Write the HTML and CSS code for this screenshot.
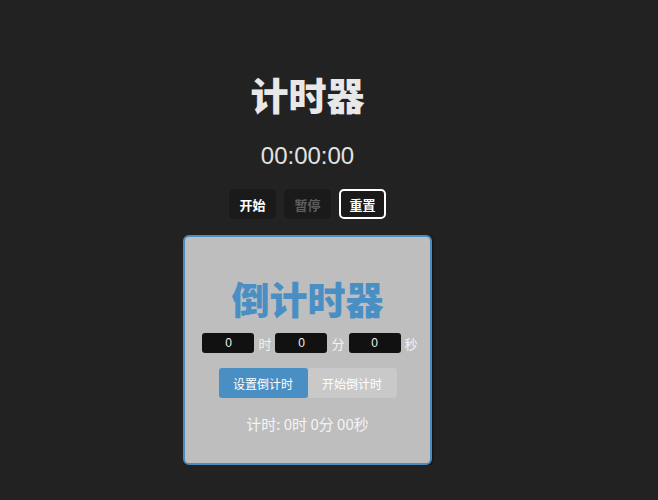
FILE: index.html
```html
<!DOCTYPE html>
<html lang="zh">
<head>
<meta charset="utf-8">
<title>计时器</title>
<link rel="stylesheet" href="styles.css">
</head>
<body>
<div class="page">
  <h1 class="title">计时器</h1>
  <div class="clock">00:00:00</div>
  <div class="controls">
    <button class="btn">开始</button>
    <button class="btn btn-disabled">暂停</button>
    <button class="btn btn-focus">重置</button>
  </div>
  <div class="card">
    <h2 class="card-title">倒计时器</h2>
    <div class="inputs">
      <input class="num" type="text" value="0"><span class="unit">时</span>
      <input class="num" type="text" value="0"><span class="unit">分</span>
      <input class="num" type="text" value="0"><span class="unit">秒</span>
    </div>
    <div class="actions">
      <button class="act act-primary">设置倒计时</button>
      <button class="act act-secondary">开始倒计时</button>
    </div>
    <div class="result">计时: 0时 0分 00秒</div>
  </div>
</div>
</body>
</html>
```
FILE: styles.css
```css
html, body {
  margin: 0;
  padding: 0;
  background: #222222;
  font-family: "Liberation Sans", "Noto Sans CJK SC", sans-serif;
}
.page {
  width: 615px;
  padding-top: 71px;
  display: flex;
  flex-direction: column;
  align-items: center;
}
.title {
  margin: 0;
  font-size: 38px;
  line-height: 46px;
  font-weight: 900;
  color: #e8e8e8;
  font-family: "Noto Sans CJK SC", sans-serif;
}
.clock {
  margin-top: 24px;
  font-size: 24px;
  line-height: 30px;
  color: #e2e2e2;
}
.controls {
  margin-top: 18px;
  display: flex;
  gap: 8px;
}
.btn {
  box-sizing: border-box;
  width: 47px;
  height: 30px;
  border: 2px solid transparent;
  border-radius: 5px;
  background: #1a1a1a;
  color: #ffffff;
  font-size: 13px;
  font-weight: 700;
  font-family: "Noto Sans CJK SC", sans-serif;
  padding: 0;
}
.btn-disabled {
  color: #5e5e5e;
}
.btn-focus {
  border-color: #ffffff;
}
.card {
  box-sizing: border-box;
  margin-top: 16px;
  width: 249px;
  height: 230px;
  background: #bebebe;
  border: 2px solid #4a8cc0;
  border-radius: 6px;
  box-shadow: 1px 1px 2px rgba(0,0,0,0.5);
  display: flex;
  flex-direction: column;
  align-items: center;
  padding-top: 38px;
}
.card-title {
  margin: 0;
  font-size: 38px;
  line-height: 46px;
  font-weight: 900;
  color: #4a8fc4;
  font-family: "Noto Sans CJK SC", sans-serif;
}
.inputs {
  margin-top: 12px;
  padding-left: 5px;
  display: flex;
  align-items: center;
}
.num {
  box-sizing: border-box;
  width: 52px;
  height: 20px;
  border: none;
  border-radius: 3px;
  background: #111111;
  color: #f0f0f0;
  text-align: center;
  font-size: 12px;
  font-family: "Liberation Sans", sans-serif;
  padding: 0;
}
.unit {
  margin: 0 4px;
  font-size: 13px;
  color: #f2f2f2;
  font-family: "Noto Sans CJK SC", sans-serif;
}
.unit:last-child {
  margin-right: 0;
}
.actions {
  margin-top: 15px;
  display: flex;
}
.act {
  box-sizing: border-box;
  width: 89px;
  height: 30px;
  border: none;
  border-radius: 3px;
  color: #ffffff;
  font-size: 12px;
  font-family: "Noto Sans CJK SC", sans-serif;
  padding: 0;
}
.act-primary {
  background: #4a8fc4;
}
.act-secondary {
  background: #c9c9c9;
}
.result {
  margin-top: 16px;
  font-size: 15px;
  line-height: 20px;
  color: #f4f4f4;
  font-family: "Noto Sans CJK SC", sans-serif;
}
```
